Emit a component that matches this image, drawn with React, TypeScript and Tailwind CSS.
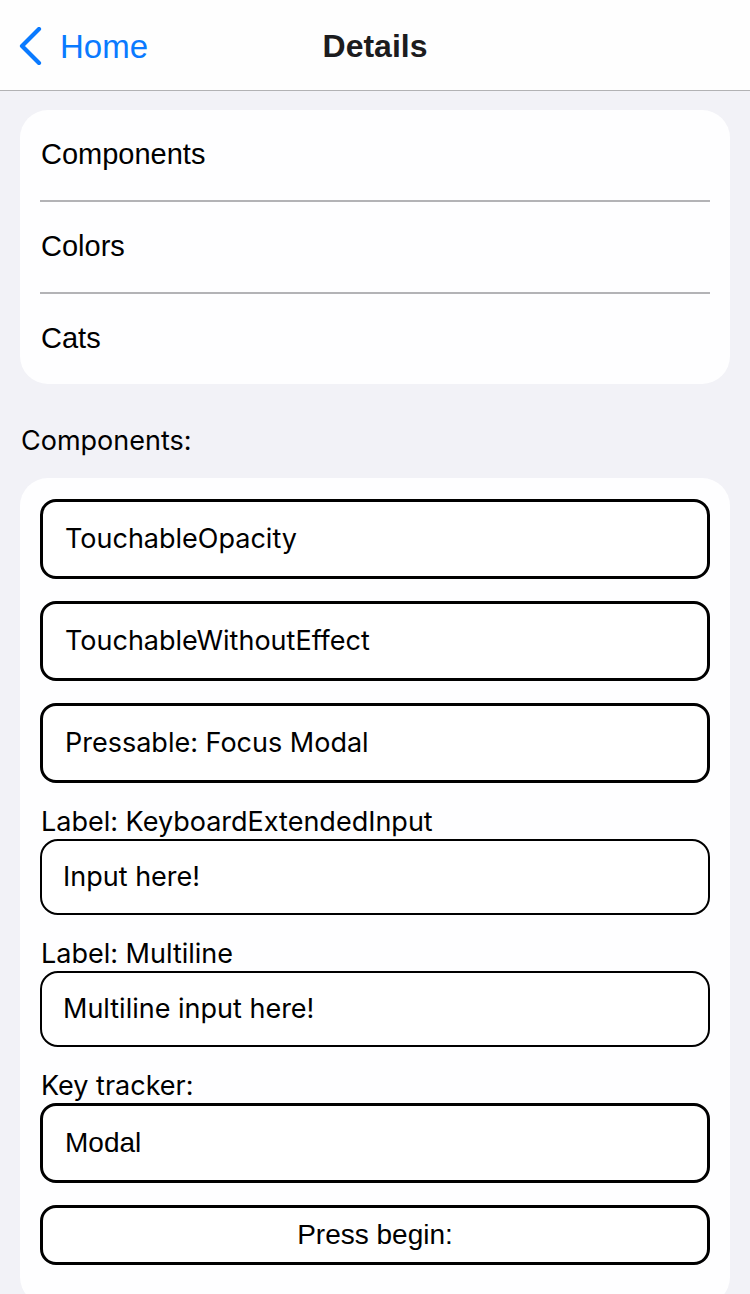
const sans = "font-['Liberation_Sans',Arial,sans-serif]";
const inter = "font-['Inter','Noto_Sans',sans-serif]";

function Header() {
  return (
    <div className="relative flex h-[91px] items-center border-b-[1.5px] border-[#b2b2b4] bg-[#fefefe]">
      <div className="flex items-center gap-[16px] pl-[18px] pt-[2px]">
        <svg width="26" height="38" viewBox="0 0 26 38" fill="none">
          <polyline points="21,2 4,19 21,36" stroke="#0a7aff" strokeWidth="4.2" strokeLinecap="round" strokeLinejoin="round" />
        </svg>
        <span className={`${sans} text-[33px] leading-none text-[#0a7aff]`}>Home</span>
      </div>
      <div className={`${sans} absolute left-1/2 top-[30px] -translate-x-1/2 text-[32px] font-bold leading-none text-[#1c1c1e]`}>Details</div>
    </div>
  );
}

function MenuList() {
  const items = ["Components", "Colors", "Cats"];
  return (
    <div className="mx-[20px] mt-[19px] rounded-[28px] bg-[#fefeff] px-[20px]">
      {items.map((item, i) => (
        <div key={item}>
          {i > 0 && <div className="h-[2px] bg-[#b3b3b6]" />}
          <div className={`${sans} flex h-[90px] items-center pl-[1px] text-[29px] text-black`}>{item}</div>
        </div>
      ))}
    </div>
  );
}

function BoxButton({ label, font = inter }: { label: string; font?: string }) {
  return (
    <div className={`${font} flex h-[80px] items-center rounded-[16px] border-[3px] border-black bg-white px-[22px] text-[27px] text-black`}>
      {label}
    </div>
  );
}

function LabeledInput({ label, value }: { label: string; value: string }) {
  return (
    <div className="flex flex-col">
      <div className={`${inter} h-[34px] pl-[1px] text-[27px] leading-[34px] text-black`}>{label}</div>
      <div className={`${inter} flex h-[76px] items-center rounded-[18px] border-2 border-black bg-white px-[21px] text-[27px] text-black`}>
        {value}
      </div>
    </div>
  );
}

export default function App() {
  return (
    <div className="h-[1294px] w-[750px] overflow-hidden bg-[#f2f2f7]">
      <Header />
      <MenuList />
      <div className={`${inter} mx-[21px] mt-[40px] text-[27px] leading-[34px] text-black`}>Components:</div>
      <div className="mx-[20px] mt-[20px] rounded-[28px] bg-[#fefeff] px-[20px] pb-[40px] pt-[21px]">
        <div className="flex flex-col gap-[22px]">
          <BoxButton label="TouchableOpacity" />
          <BoxButton label="TouchableWithoutEffect" />
          <BoxButton label="Pressable: Focus Modal" />
          <LabeledInput label="Label: KeyboardExtendedInput" value="Input here!" />
          <LabeledInput label="Label: Multiline" value="Multiline input here!" />
          <div className="flex flex-col">
            <div className={`${inter} h-[34px] pl-[1px] text-[27px] leading-[34px] text-black`}>Key tracker:</div>
            <BoxButton label="Modal" font={`${sans} !text-[28px]`} />
          </div>
          <div className={`${sans} flex h-[60px] items-center justify-center rounded-[16px] border-[3px] border-black bg-white text-[28px] text-black`}>
            Press begin:
          </div>
        </div>
      </div>
    </div>
  );
}
